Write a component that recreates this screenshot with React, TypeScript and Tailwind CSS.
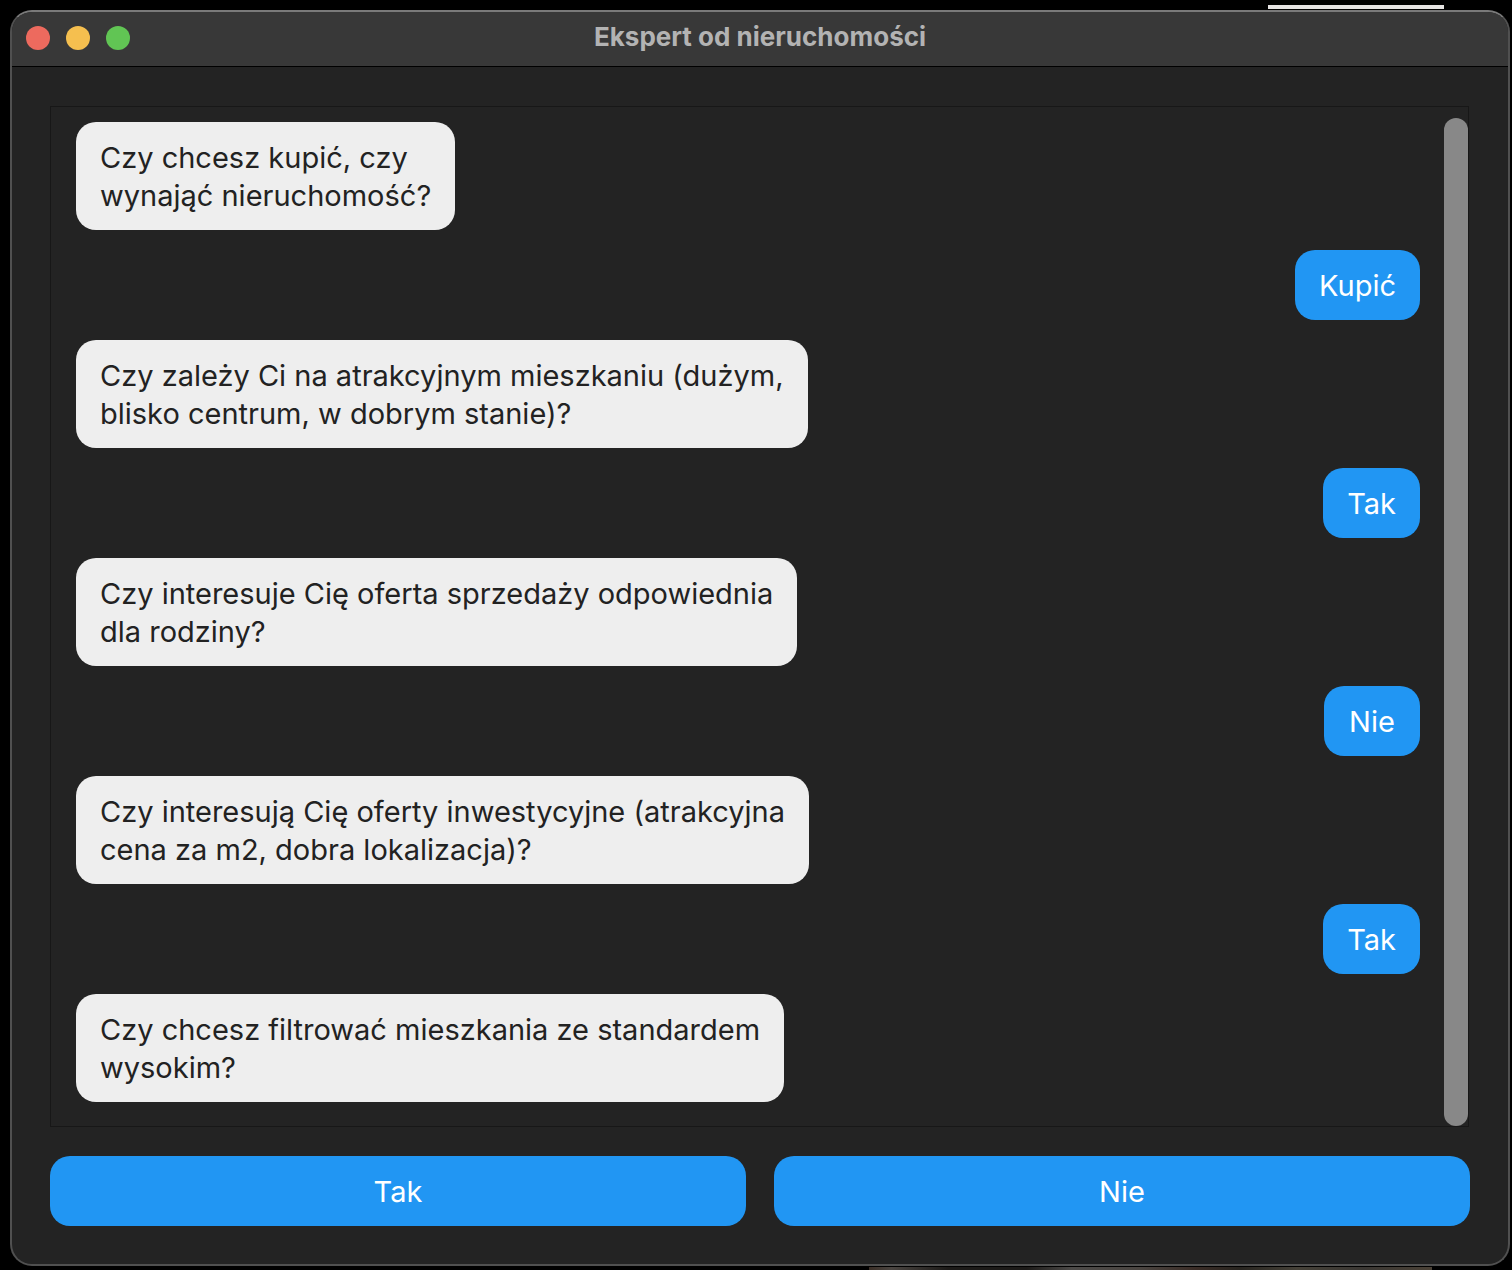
type Message = { from: 'bot' | 'user'; lines: string[] };

const messages: Message[] = [
  { from: 'bot', lines: ['Czy chcesz kupić, czy', 'wynająć nieruchomość?'] },
  { from: 'user', lines: ['Kupić'] },
  { from: 'bot', lines: ['Czy zależy Ci na atrakcyjnym mieszkaniu (dużym,', 'blisko centrum, w dobrym stanie)?'] },
  { from: 'user', lines: ['Tak'] },
  { from: 'bot', lines: ['Czy interesuje Cię oferta sprzedaży odpowiednia', 'dla rodziny?'] },
  { from: 'user', lines: ['Nie'] },
  { from: 'bot', lines: ['Czy interesują Cię oferty inwestycyjne (atrakcyjna', 'cena za m2, dobra lokalizacja)?'] },
  { from: 'user', lines: ['Tak'] },
  { from: 'bot', lines: ['Czy chcesz filtrować mieszkania ze standardem', 'wysokim?'] },
];

function Bubble({ message }: { message: Message }) {
  return (
    <li
      className={
        message.from === 'bot'
          ? 'self-start rounded-[20px] bg-[#eeeeee] px-6 pt-[17px] pb-[15px] text-[#222222]'
          : 'min-w-24 self-end rounded-[20px] bg-[#2196f3] px-6 pt-[17px] pb-[15px] text-center text-white'
      }
    >
      {message.lines.map((line) => (
        <span key={line} className="block">
          {line}
        </span>
      ))}
    </li>
  );
}

function Answer({ label }: { label: string }) {
  return (
    <button
      type="button"
      className="rounded-[20px] bg-[#2196f3] px-6 pt-[17px] pb-[15px] text-center text-white"
    >
      {label}
    </button>
  );
}

export default function App() {
  return (
    <div className="relative flex min-h-screen flex-col bg-black pt-[10px] pr-[2px] pb-1 pl-[10px] font-['Inter','Liberation_Sans',sans-serif] text-[29px] leading-[38px]">
      <div className="absolute top-[5px] right-[68px] h-1 w-44 bg-[#e6e4e3]" />
      <div className="absolute right-20 bottom-0 h-[3px] w-[563px] bg-[linear-gradient(to_right,#3a2e26,#4a4541_4%,#1c1a18_14%,#1c1a18_28%,#4c4a48_36%,#4a4541_48%,#3a2c26_58%,#27241f_66%,#454138_76%,#3a3733_88%,#4a4136)]" />
      <main className="flex grow flex-col overflow-hidden rounded-[22px] border-2 border-[#505050] border-t-[#7a7a7a] bg-[#232323]">
        <header className="grid h-[55px] shrink-0 grid-cols-[1fr_auto_1fr] items-center border-b border-black bg-[#383838] px-[14px] pb-[2px]">
          <div className="flex gap-4">
            <button type="button" aria-label="Zamknij" className="size-6 rounded-full bg-[#ed6a5e]" />
            <button type="button" aria-label="Minimalizuj" className="size-6 rounded-full bg-[#f5bf4f]" />
            <button type="button" aria-label="Powiększ" className="size-6 rounded-full bg-[#61c554]" />
          </div>
          <h1 className="pb-[2px] text-[26px] leading-8 font-bold text-[#b3b3b3]">
            Ekspert od nieruchomości
          </h1>
        </header>
        <section className="flex grow flex-col gap-[29px] px-[38px] pt-[39px] pb-[38px]">
          <div className="mr-px flex grow border border-[#171717]">
            <ul className="flex grow flex-col gap-5 pt-[15px] pr-6 pb-6 pl-[25px]">
              {messages.map((message, index) => (
                <Bubble key={index} message={message} />
              ))}
            </ul>
            <div className="flex w-6 shrink-0 pt-[11px]">
              <div className="grow rounded-full bg-[#888888]" />
            </div>
          </div>
          <div className="grid grid-cols-2 gap-7">
            <Answer label="Tak" />
            <Answer label="Nie" />
          </div>
        </section>
      </main>
    </div>
  );
}
